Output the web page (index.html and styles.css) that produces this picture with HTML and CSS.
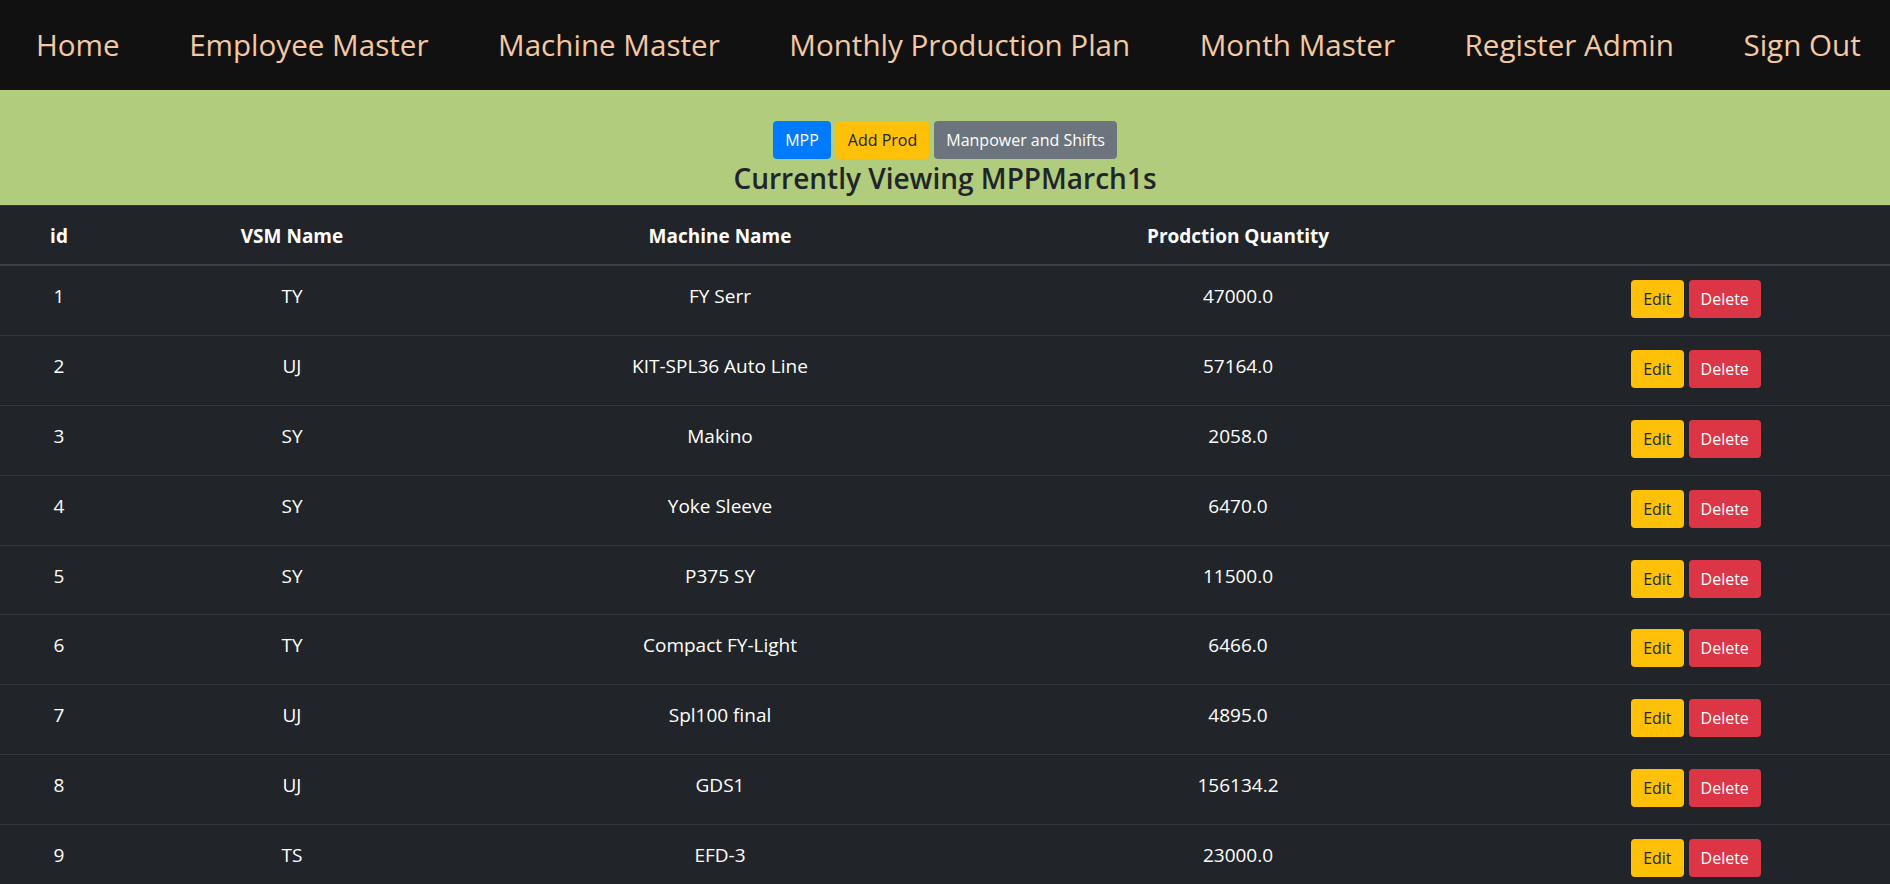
FILE: index.html
```html
<!DOCTYPE html>
<html lang="en">
<head>
<meta charset="utf-8">
<title>MPP</title>
<link rel="stylesheet" href="styles.css">
</head>
<body>
<nav class="topnav">
  <a class="nav-link" href="#">Home</a>
  <a class="nav-link" href="#">Employee Master</a>
  <a class="nav-link" href="#">Machine Master</a>
  <a class="nav-link" href="#">Monthly Production Plan</a>
  <a class="nav-link" href="#">Month Master</a>
  <a class="nav-link" href="#">Register Admin</a>
  <a class="nav-link" href="#">Sign Out</a>
</nav>
<section class="banner">
  <div class="btn-row">
    <a class="btn btn-blue" href="#">MPP</a>
    <a class="btn btn-yellow" href="#">Add Prod</a>
    <a class="btn btn-grey" href="#">Manpower and Shifts</a>
  </div>
  <h3 class="title">Currently Viewing MPPMarch1s</h3>
</section>
<table class="plan">
  <colgroup>
    <col class="c-id"><col class="c-vsm"><col class="c-machine"><col class="c-qty"><col class="c-act">
  </colgroup>
  <thead>
    <tr><th>id</th><th>VSM Name</th><th>Machine Name</th><th>Prodction Quantity</th><th></th></tr>
  </thead>
  <tbody>
    <tr><td>1</td><td>TY</td><td>FY Serr</td><td>47000.0</td><td class="act"><a class="btn btn-yellow" href="#">Edit</a> <a class="btn btn-red" href="#">Delete</a></td></tr>
    <tr><td>2</td><td>UJ</td><td>KIT-SPL36 Auto Line</td><td>57164.0</td><td class="act"><a class="btn btn-yellow" href="#">Edit</a> <a class="btn btn-red" href="#">Delete</a></td></tr>
    <tr><td>3</td><td>SY</td><td>Makino</td><td>2058.0</td><td class="act"><a class="btn btn-yellow" href="#">Edit</a> <a class="btn btn-red" href="#">Delete</a></td></tr>
    <tr><td>4</td><td>SY</td><td>Yoke Sleeve</td><td>6470.0</td><td class="act"><a class="btn btn-yellow" href="#">Edit</a> <a class="btn btn-red" href="#">Delete</a></td></tr>
    <tr><td>5</td><td>SY</td><td>P375 SY</td><td>11500.0</td><td class="act"><a class="btn btn-yellow" href="#">Edit</a> <a class="btn btn-red" href="#">Delete</a></td></tr>
    <tr><td>6</td><td>TY</td><td>Compact FY-Light</td><td>6466.0</td><td class="act"><a class="btn btn-yellow" href="#">Edit</a> <a class="btn btn-red" href="#">Delete</a></td></tr>
    <tr><td>7</td><td>UJ</td><td>Spl100 final</td><td>4895.0</td><td class="act"><a class="btn btn-yellow" href="#">Edit</a> <a class="btn btn-red" href="#">Delete</a></td></tr>
    <tr><td>8</td><td>UJ</td><td>GDS1</td><td>156134.2</td><td class="act"><a class="btn btn-yellow" href="#">Edit</a> <a class="btn btn-red" href="#">Delete</a></td></tr>
    <tr><td>9</td><td>TS</td><td>EFD-3</td><td>23000.0</td><td class="act"><a class="btn btn-yellow" href="#">Edit</a> <a class="btn btn-red" href="#">Delete</a></td></tr>
  </tbody>
</table>
</body>
</html>
```
FILE: styles.css
```css
html, body {
  margin: 0;
  padding: 0;
}
body {
  font-family: "Open Sans", "Noto Sans", "Liberation Sans", sans-serif;
  font-size: 16px;
  line-height: 1.5;
  color: #212529;
  background: #212529;
}
a { text-decoration: none; }

.topnav {
  display: flex;
  align-items: center;
  gap: 69.5px;
  height: 90px;
  padding-left: 36px;
  background: #111111;
  box-sizing: border-box;
  white-space: nowrap;
  overflow: hidden;
}
.nav-link {
  color: #f3c9a3;
  font-size: 29.6px;
  font-weight: 400;
  line-height: 40px;
}

.banner {
  background: #b0cc7c;
  text-align: center;
  padding: 31px 0 8px;
}
.btn-row {
  display: flex;
  justify-content: center;
  gap: 5px;
}
.btn {
  display: inline-block;
  font-size: 16px;
  line-height: 24px;
  padding: 7px 12px;
  border-radius: 4px;
  color: #fff;
  vertical-align: top;
}
.btn-blue { background: #007bff; color: #fff; }
.btn-yellow { background: #ffc107; color: #212529; }
.btn-grey { background: #6c757d; color: #fff; }
.btn-red { background: #dc3545; color: #fff; }

.title {
  margin: 0;
  font-size: 28px;
  font-weight: 600;
  line-height: 38px;
  color: #212529;
}

.plan {
  width: 100%;
  table-layout: fixed;
  border-collapse: collapse;
  background: #212529;
  color: #fff;
  text-align: center;
  font-size: 19px;
}
.c-id { width: 118px; }
.c-vsm { width: 348px; }
.c-machine { width: 508px; }
.c-qty { width: 528px; }
.c-act { width: 388px; }

.plan th {
  font-weight: 700;
  line-height: 24px;
  padding: 18px 12px 16px;
  border-top: 1px solid #32383e;
  border-bottom: 2px solid #3b4147;
  vertical-align: top;
}
.plan td {
  line-height: 24px;
  padding: 18px 12px 0;
  border-top: 1px solid #32383e;
  vertical-align: top;
}
.plan td.act {
  padding: 14px 12px 16.875px;
  font-size: 0;
  line-height: 0;
}
.plan td.act .btn + .btn {
  margin-left: 5px;
}
```
